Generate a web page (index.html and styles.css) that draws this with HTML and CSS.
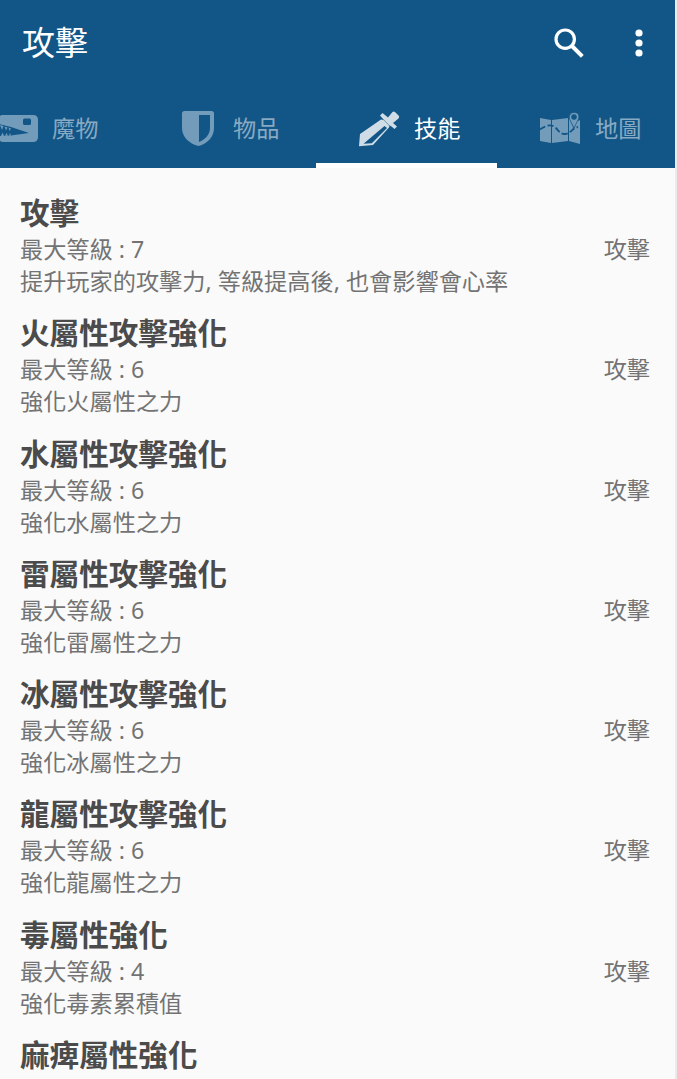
FILE: index.html
```html
<!DOCTYPE html>
<html lang="zh-Hant">
<head>
    <meta charset="UTF-8">
    <meta name="viewport" content="width=device-width, initial-scale=1.0">
    <title>攻擊</title>
    <link rel="stylesheet" href="styles.css">
</head>
<body>
    <div class="app">
        <header class="header">
            <div class="toolbar">
                <h1>攻擊</h1>
                <svg class="search" viewBox="0 0 32 32">
                    <circle cx="12.2" cy="12.2" r="9.2" fill="none" stroke="#fff" stroke-width="3.2"/>
                    <path d="M18.5 18.5L29.3 29.3" stroke="#fff" stroke-width="4"/>
                </svg>
                <svg class="more" viewBox="0 0 8 28">
                    <circle cx="4" cy="4" r="3.6"/>
                    <circle cx="4" cy="14" r="3.6"/>
                    <circle cx="4" cy="24" r="3.6"/>
                </svg>
            </div>
            <nav class="tabs">
                <div class="tab">
                    <svg class="icon" viewBox="0 0 40 40">
                        <path fill-rule="evenodd" d="M5 7H36Q41 7 41 12V29Q41 34 36 34H6Q2 34 2 29V28L14 27.5L32 25L14 19L2 16V12Q2 7 5 7ZM27.5 10.5Q26 10.5 26 12V15.5Q26 17 27.5 17H32.5Q34 17 34 15.5V12Q34 10.5 32.5 10.5Z"/>
                        <path d="M3 17L6.5 18L5 22ZM7.5 18.5L10.5 19.5L9 22.5ZM11.5 19.5L14 20.5L12.5 23ZM4 28L5.5 24.5L7 28ZM8 28L9.5 25L11 27.5ZM12 27.5L13 25L14 27.5Z"/>
                    </svg>
                    <span>魔物</span>
                </div>
                <div class="tab">
                    <svg class="icon" viewBox="0 0 40 40">
                        <path fill-rule="evenodd" d="M6.5 3H33.5Q36 3 36 5.5V20C36 29 29.5 35.5 20.5 38C11 35.5 4 29 4 20V5.5Q4 3 6.5 3ZM21 7V34C27 31.5 32 27 32 20V7Z"/>
                    </svg>
                    <span>物品</span>
                </div>
                <div class="tab active">
                    <svg class="icon" viewBox="0 0 40 40">
                        <path fill-rule="evenodd" d="M22 11.5L24.5 12L30.5 18L30 19.5L14 37L0 38.200L1 26ZM25.5 18L4.5 35.8L12.8 35.3L28 20Z"/>
                        <path d="M21 7.500L23.5 5L29 9.5L33.5 4Q34.5 3 36 4L40 8Q40.5 9 39.5 10.5L34 15L38 18.5L35.5 21L32.5 18.5L30 17L25 12Z"/>
                    </svg>
                    <span>技能</span>
                </div>
                <div class="tab">
                    <svg class="icon" viewBox="0 0 40 40">
                        <path d="M0 10L11 12V35L0 33ZM12 12L28 10V33L12 35ZM29 10L34 21L37 13.5L40 12V36L29 33Z"/>
                        <path class="pin" fill-rule="evenodd" d="M34 4.5C29.5 4.5 28.5 9 30 12L34 20L38 12C40 8 38.5 4.5 34 4.5ZM34 6.5A2.5 2.5 0 1 1 34 11.5A2.5 2.5 0 1 1 34 6.5Z"/>
                        <path class="route" d="M0 21.5C4 19 9 15.5 14 18.5C19 22 19 26 25 26C31 25.5 32 20 38 19"/>
                    </svg>
                    <span>地圖</span>
                </div>
            </nav>
        </header>

        <main class="skills">
            <section class="skill">
                <h2>攻擊</h2>
                <div class="level"><span>最大等級 : 7</span><span>攻擊</span></div>
                <p>提升玩家的攻擊力, 等級提高後, 也會影響會心率</p>
            </section>
            <section class="skill">
                <h2>火屬性攻擊強化</h2>
                <div class="level"><span>最大等級 : 6</span><span>攻擊</span></div>
                <p>強化火屬性之力</p>
            </section>
            <section class="skill">
                <h2>水屬性攻擊強化</h2>
                <div class="level"><span>最大等級 : 6</span><span>攻擊</span></div>
                <p>強化水屬性之力</p>
            </section>
            <section class="skill">
                <h2>雷屬性攻擊強化</h2>
                <div class="level"><span>最大等級 : 6</span><span>攻擊</span></div>
                <p>強化雷屬性之力</p>
            </section>
            <section class="skill">
                <h2>冰屬性攻擊強化</h2>
                <div class="level"><span>最大等級 : 6</span><span>攻擊</span></div>
                <p>強化冰屬性之力</p>
            </section>
            <section class="skill">
                <h2>龍屬性攻擊強化</h2>
                <div class="level"><span>最大等級 : 6</span><span>攻擊</span></div>
                <p>強化龍屬性之力</p>
            </section>
            <section class="skill">
                <h2>毒屬性強化</h2>
                <div class="level"><span>最大等級 : 4</span><span>攻擊</span></div>
                <p>強化毒素累積值</p>
            </section>
            <section class="skill">
                <h2>麻痺屬性強化</h2>
            </section>
        </main>
    </div>
</body>
</html>
```
FILE: styles.css
```css
* {
    box-sizing: border-box;
}
body {
    margin: 0;
    height: 1079px;
    overflow: hidden;
    font-family: "Noto Sans", "Noto Sans CJK TC", sans-serif;
    background-color: #fafafa;
}
.app {
    height: 1079px;
    overflow: hidden;
    border-right: 2px solid #eaeaea;
}
h1, h2, p {
    margin: 0;
}

/* Header */
.header {
    height: 168px;
    overflow: hidden;
    color: #fff;
    background-color: #125687;
}
.toolbar {
    display: flex;
    align-items: center;
    height: 85px;
    padding: 0 32px 0 22px;
}
h1 {
    flex: 1;
    font-size: 33px;
    font-weight: 400;
    line-height: 84px;
}
.search {
    width: 32px;
    height: 32px;
    margin-right: 50px;
}
.more {
    width: 8px;
    height: 28px;
    fill: #fff;
}

/* Tabs */
.tabs {
    display: flex;
    height: 83px;
    margin-left: -46px;
}
.tab {
    display: flex;
    flex: 0 0 181px;
    align-items: center;
    gap: 15px;
    padding: 8px 0 0 43px;
    color: rgba(255, 255, 255, 0.5);
    font-size: 23.2px;
    border-bottom: 5px solid transparent;
}
.tab span {
    line-height: 32px;
}
.tab.active {
    color: #fff;
    border-bottom-color: #fff;
}
.icon {
    flex: none;
    width: 40px;
    height: 40px;
    overflow: visible;
    fill: #739bba;
}
.active .icon {
    fill: #d0dde7;
}
.pin {
    stroke: #125687;
    stroke-width: 0.6;
}
.route {
    fill: none;
    stroke: #125687;
    stroke-width: 1.8;
    stroke-dasharray: 6 2.5;
}
.active .icon .route,
.icon .route {
    fill: none;
}

/* Skill list */
.skills {
    padding: 25px 25px 0 20px;
}
.skill {
    margin-bottom: 16.25px;
    color: #737373;
    font-size: 23.2px;
    line-height: 32px;
}
h2 {
    color: #4b4b4b;
    font-size: 29.6px;
    line-height: 40px;
}
.level {
    display: flex;
    justify-content: space-between;
}
```
